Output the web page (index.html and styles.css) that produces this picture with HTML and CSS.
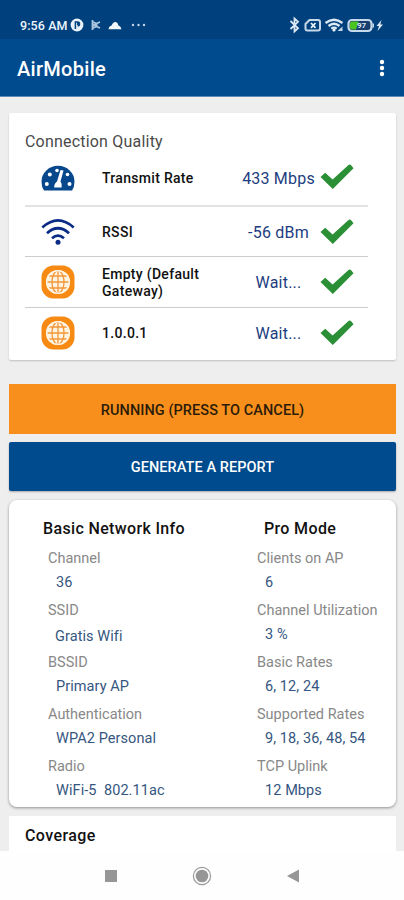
FILE: index.html
```
<!DOCTYPE html>
<html lang="en">
<head>
<meta charset="utf-8">
<title>AirMobile</title>
<link rel="stylesheet" href="styles.css">
</head>
<body>
<svg class="defs" width="0" height="0">
  <symbol id="check" viewBox="0 0 34 26"><path d="M0.500 13 5.200 8.800 12.600 15.400 28.500 1 Q30 0 31.400 1.400 L33.500 4.200 12.800 25Z" fill="#2b8f35"/></symbol>
  <symbol id="globe" viewBox="0 0 34 34">
    <rect x="0.5" y="0.5" width="33" height="33" rx="12" fill="#f68a12"/>
    <circle cx="17" cy="17" r="12" fill="#fff3e2"/>
    <g fill="none" stroke="#f3983a" stroke-width="1.3"><path d="M17 5.5v23M6 17h22M8 11h18M8 23h18"/><ellipse cx="17" cy="17" rx="6" ry="11.2"/></g>
    <circle cx="17" cy="17" r="11.3" fill="none" stroke="#fff3e2" stroke-width="1.6"/>
  </symbol>
</svg>
<div class="phone">
  <header class="status">
    <span class="time">9:56 AM</span>
    <svg class="s-disc" width="14" height="14" viewBox="0 0 14 14"><circle cx="7" cy="7" r="6.4" fill="#e9f2fa"/><path d="M5.4 11V4h2.2a1.9 1.9 0 0 1 0 3.8M7.8 4v3" fill="none" stroke="#00407c" stroke-width="1.5"/></svg>
    <svg class="s-flag" width="10" height="12" viewBox="0 0 10 12"><path d="M1.500 1v10M2 3.200 5.500 4.600 9 3M2 6h4.500M2 8.800 5.500 7.400 9 9" fill="none" stroke="#a9c4dd" stroke-width="1.800"/></svg>
    <svg class="s-cloud" width="14" height="9" viewBox="0 0 14 9"><path d="M0.500 8.300Q1 5 3.600 4.500 5 1 7.200 1 9.500 1 10.300 4.200 13 5 13.500 8.300Z" fill="#f3f8fc"/></svg>
    <svg class="s-dots" width="15" height="4" viewBox="0 0 15 4" fill="#c3d5e6"><circle cx="2" cy="2" r="1.200"/><circle cx="7.500" cy="2" r="1.200"/><circle cx="13" cy="2" r="1.200"/></svg>
    <svg class="s-right" width="96" height="18" viewBox="0 0 96 18">
      <path d="M1.500 5 9 12.200 5.500 15.400V2.600L9 5.800 1.500 13" fill="none" stroke="#dce9f4" stroke-width="1.800"/>
      <path d="M20.500 4H29q2 0 2 2v6.500q0 2-2 2H18.500q-2 0-2-2V8Z" fill="none" stroke="#c6d9ea" stroke-width="2"/>
      <path d="M22 7 26.500 11.800M26.500 7 22 11.800" stroke="#e5eff8" stroke-width="1.800"/>
      <path d="M36.500 7q8.500-6.500 17 0M39.500 10q5.500-4.500 11 0M42.300 12.600q2.700-2 5.400 0" fill="none" stroke="#dce9f4" stroke-width="2.300"/>
      <circle cx="45" cy="14" r="1.600" fill="#e9f2fa"/><path d="M48.500 15 53.500 10.500V15Z" fill="#c6d9ea"/>
      <rect x="59.500" y="4" width="23" height="11" rx="3.500" fill="#183f70" stroke="#c6d9ea" stroke-width="2.200"/>
      <path d="M63.500 5.500h6L67 13.500H63.500q-2.500 0-2.500-2V7.500q0-2 2.500-2Z" fill="#4cc51e"/>
      <path d="M83.500 7.500h1.500v4h-1.500Z" fill="#c6d9ea"/>
      <text class="batt" x="68" y="12.400">97</text>
      <path d="M92.500 4 87.500 10h2.500L88.500 15 94 8.500h-2.700Z" fill="#dce9f4"/>
    </svg>
  </header>
  <div class="appbar">
    <h1>AirMobile</h1>
    <svg width="6" height="20" viewBox="0 0 6 20" fill="#fff"><circle cx="3" cy="4" r="2.200"/><circle cx="3" cy="10" r="2.200"/><circle cx="3" cy="16" r="2.200"/></svg>
  </div>
  <main>
    <section class="card quality">
      <h2>Connection Quality</h2>
      <div class="row r1">
        <svg class="ico" width="34" height="28" viewBox="0 0 34 28"><path d="M3 25.500Q0.500 22 0.500 16.500A16.500 15.700 0 0 1 33.500 16.500Q33.500 22 31 25.500Z" fill="#07478c"/><g fill="#fff"><circle cx="5.800" cy="19" r="2"/><circle cx="8.800" cy="9.500" r="2"/><circle cx="16" cy="5.500" r="1.800"/><circle cx="26.500" cy="9.500" r="1.800"/><circle cx="28.500" cy="19" r="2"/><path d="M19.500 5 22.500 5.500 19.500 16.500Q21.500 19 20.600 22.500H13.200Q13 18.500 16 16.500Z"/></g></svg>
        <span class="name">Transmit Rate</span><span class="val">433 Mbps</span><svg class="chk"><use href="#check"/></svg>
      </div>
      <div class="row r2">
        <svg class="ico" width="34" height="28" viewBox="0 0 34 28"><g fill="none" stroke="#0a2c84" stroke-width="2.800"><path d="M1.300 9.500Q17-4.700 32.700 9.500M6 15.200Q17 5.400 28 15.200M11 20.300Q17 15 23 20.300"/></g><circle cx="17" cy="24.200" r="2.500" fill="#0a2c84"/></svg>
        <span class="name">RSSI</span><span class="val">-56 dBm</span><svg class="chk"><use href="#check"/></svg>
      </div>
      <div class="row r3">
        <svg class="ico" width="34" height="34"><use href="#globe"/></svg>
        <span class="name">Empty (Default<br>Gateway)</span><span class="val">Wait...</span><svg class="chk"><use href="#check"/></svg>
      </div>
      <div class="row r4">
        <svg class="ico" width="34" height="34"><use href="#globe"/></svg>
        <span class="name">1.0.0.1</span><span class="val">Wait...</span><svg class="chk"><use href="#check"/></svg>
      </div>
    </section>
    <button class="btn run">RUNNING (PRESS TO CANCEL)</button>
    <button class="btn report">GENERATE A REPORT</button>
    <section class="card info">
      <div class="col">
        <h3>Basic Network Info</h3>
        <dl>
          <dt>Channel</dt><dd>36</dd>
          <dt>SSID</dt><dd class="ssid">Gratis Wifi</dd>
          <dt>BSSID</dt><dd>Primary AP</dd>
          <dt>Authentication</dt><dd>WPA2 Personal</dd>
          <dt>Radio</dt><dd>WiFi-5&nbsp; 802.11ac</dd>
        </dl>
      </div>
      <div class="col pro">
        <h3>Pro Mode</h3>
        <dl>
          <dt>Clients on AP</dt><dd>6</dd>
          <dt>Channel Utilization</dt><dd>3 %</dd>
          <dt>Basic Rates</dt><dd>6, 12, 24</dd>
          <dt>Supported Rates</dt><dd>9, 18, 36, 48, 54</dd>
          <dt>TCP Uplink</dt><dd>12 Mbps</dd>
        </dl>
      </div>
    </section>
    <section class="card coverage"><h2>Coverage</h2></section>
  </main>
  <nav class="nav">
    <svg width="14" height="14" viewBox="0 0 14 14"><rect x="1" y="1" width="12" height="12" fill="#969696"/></svg>
    <svg width="20" height="20" viewBox="0 0 20 20"><circle cx="10" cy="10" r="8.600" fill="none" stroke="#999" stroke-width="1.200"/><circle cx="10" cy="10" r="6.300" fill="#969696"/></svg>
    <svg width="14" height="14" viewBox="0 0 14 14"><path d="M1 7 13 0.500V13.500Z" fill="#969696"/></svg>
  </nav>
</div>
</body>
</html>
```
FILE: styles.css
```
* { box-sizing: border-box; margin: 0; padding: 0; }
body { font-family: Roboto, "Liberation Sans", sans-serif; background: #eee; color: #111; }
.defs { display: block; height: 0; }
.phone { width: 404px; height: 900px; overflow: hidden; display: flex; flex-direction: column; background: #eee; }
.status { flex: none; height: 39px; background: #00407c; display: flex; align-items: center; padding: 11px 19px 0 20px; color: #eef5fb; }
.time { font-size: 12.5px; font-weight: 500; width: 50px; white-space: nowrap; letter-spacing: .1px; }
.s-flag { margin-left: 7px; }
.s-cloud { margin-left: 7px; }
.s-dots { margin-left: 9px; }
.s-right { margin-left: auto; }
.batt { font: 700 8px Roboto, sans-serif; fill: #dce9f4; }
.appbar { flex: none; height: 58px; background: #004b8e; border-bottom: 1px solid #5d8ab5; display: flex; align-items: center; justify-content: space-between; padding: 1px 19px 0 17px; }
.appbar h1 { font-size: 20px; font-weight: 500; color: #fff; letter-spacing: .3px; padding-top: 2px; }
main { flex: none; height: 754px; padding: 16px 8px 0 9px; overflow: hidden; }
.card { background: #fff; box-shadow: 0 1px 2px rgba(0,0,0,.2); }
.quality { height: 247px; border-radius: 2px; padding: 19px 28px 0 16px; }
.quality h2 { font-size: 16px; font-weight: 400; color: #4a4a4a; line-height: 20px; letter-spacing: .2px; }
.row { display: grid; grid-template-columns: 77px 133px 85px 1fr; align-items: center; border-bottom: 1px solid #ccc; }
.r1 { height: 55px; border-bottom: 2px solid #e2e2e2; }
.r2 { height: 50px; }
.r3 { height: 51px; }
.r4 { height: 51px; border: 0; }
.r1 .chk { margin-top: -3px; }
.r4 .chk, .r4 .ico { margin-top: -2px; }
.ico { margin-left: 16px; }
.name { font-size: 14px; font-weight: 500; line-height: 17px; letter-spacing: .3px; white-space: nowrap; }
.r2 .name, .r3 .name { padding-top: 2px; }
.val { font-size: 16px; color: #1c3d7e; text-align: center; white-space: nowrap; letter-spacing: .2px; }
.r2 .val { padding-top: 1px; }
.r1 .val { margin-top: -1px; }
.val { padding-left: 2px; }
.chk { width: 34px; height: 26px; }
.btn { display: flex; width: 387px; border: 0; align-items: center; justify-content: center; font-family: Roboto, sans-serif; font-size: 14.5px; font-weight: 500; padding-top: 2px; }
.run { height: 50px; margin-top: 24px; background: #f88f1d; color: #2b1c09; letter-spacing: .07px; }
.report { height: 49px; margin-top: 8px; background: #004b8d; color: #fff; border-radius: 2px; box-shadow: 0 1px 2px rgba(0,0,0,.3); letter-spacing: .07px; }
.info { height: 307px; margin-top: 9px; border-radius: 8px; display: grid; grid-template-columns: 209px 1fr; padding: 19px 0 0 39px; box-shadow: 0 1px 3px rgba(0,0,0,.4); }
.info h3 { font-size: 16px; font-weight: 500; line-height: 20px; letter-spacing: .35px; margin-left: -5px; }
.pro h3 { margin-left: 7px; }
dl { margin-top: 8px; font-size: 14.5px; }
dt { color: #888; height: 24px; line-height: 24px; white-space: nowrap; }
dd { color: #355680; height: 28px; line-height: 24px; padding-left: 8px; letter-spacing: .08px; white-space: nowrap; }
.ssid { padding: 2px 0 0 7px; }
.coverage { height: 60px; margin-top: 9px; padding: 10px 16px; box-shadow: none; }
.coverage h2 { font-size: 16px; font-weight: 500; line-height: 20px; letter-spacing: .4px; }
.nav { flex: 1; background: #fefefe; display: flex; align-items: center; justify-content: space-between; padding: 1px 104px 0; }
```
